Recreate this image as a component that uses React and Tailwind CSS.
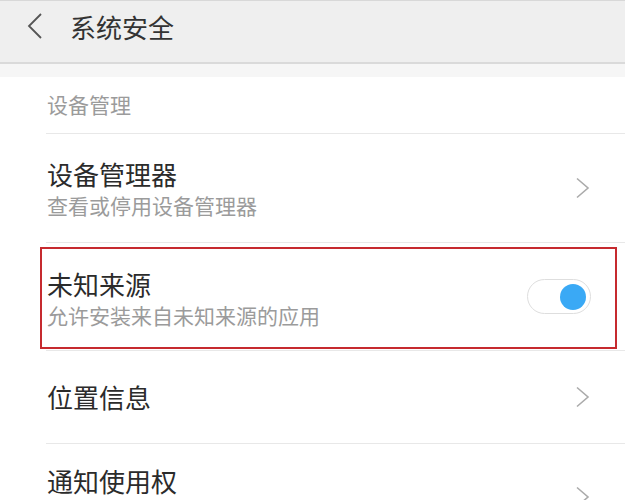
import React, { useState } from "react";

const font = "font-['Noto_Sans_CJK_SC','Noto_Sans',sans-serif]";

function ChevronRight() {
  return (
    <svg width="15" height="22" viewBox="0 0 15 22" className="shrink-0">
      <polyline points="2,1.5 13,11 2,20.5" fill="none" stroke="#ababab" strokeWidth="1.6" strokeLinejoin="miter" />
    </svg>
  );
}

function Toggle({ on, onClick }) {
  return (
    <button
      onClick={onClick}
      className={`w-[64px] h-[35px] rounded-full border-[1.5px] border-[#dedede] bg-white flex items-center px-[4px] shrink-0 ${on ? "justify-end" : "justify-start"}`}
    >
      <span className={`w-[26px] h-[26px] rounded-full ${on ? "bg-[#3aa9f5]" : "bg-[#d0d0d0]"}`} />
    </button>
  );
}

export default function App() {
  const [unknownSources, setUnknownSources] = useState(true);

  return (
    <div className={`w-[625px] h-[500px] overflow-hidden bg-white ${font}`}>
      {/* Title bar */}
      <div className="h-[62px] bg-[#efefef] border-t border-[#d8d8d8] flex items-start pt-[10px]">
        <svg width="16" height="26" viewBox="0 0 16 26" className="ml-[27px] mt-[2px] shrink-0">
          <polyline points="14,1 2,13 14,25" fill="none" stroke="#555555" strokeWidth="1.8" />
        </svg>
        <span className="ml-[27px] text-[26px] leading-[32px] text-[#333333]">系统安全</span>
      </div>
      <div className="h-[2px] bg-[#dadada]" />
      <div className="h-[13px] bg-[#f6f6f6]" />

      {/* Section label */}
      <div className="h-[56px] pl-[47px] flex items-center text-[21px] text-[#9b9b9b]">设备管理</div>

      <div className="ml-[46px]">
        {/* 设备管理器 */}
        <div className="h-[109px] border-t border-[#e8e8e8] flex items-center pr-[35px]">
          <div className="flex-1 flex flex-col self-start pt-[24px] pl-px">
            <span className="text-[26px] leading-[32px] text-[#2b2b2b]">设备管理器</span>
            <span className="text-[21px] leading-[30px] text-[#9b9b9b]">查看或停用设备管理器</span>
          </div>
          <ChevronRight />
        </div>

        {/* 未知来源 */}
        <div className="relative h-[108px] border-t border-[#e8e8e8] flex items-center pr-[34px]">
          <div className="flex-1 flex flex-col self-start pt-[25px] pl-px">
            <span className="text-[26px] leading-[32px] text-[#2b2b2b]">未知来源</span>
            <span className="text-[21px] leading-[30px] text-[#9b9b9b]">允许安装来自未知来源的应用</span>
          </div>
          <Toggle on={unknownSources} onClick={() => setUnknownSources(!unknownSources)} />
          <div className="absolute -left-[6px] right-[8px] top-[4px] bottom-[1px] border-2 border-[#c62a2f] pointer-events-none" />
        </div>

        {/* 位置信息 */}
        <div className="h-[93px] border-t border-[#e8e8e8] flex items-center pr-[35px]">
          <span className="flex-1 pl-px text-[26px] leading-[32px] text-[#2b2b2b]">位置信息</span>
          <ChevronRight />
        </div>

        {/* 通知使用权 */}
        <div className="h-[106px] border-t border-[#e8e8e8] flex items-center pr-[35px]">
          <div className="flex-1 flex flex-col self-start pt-[21px] pl-px">
            <span className="text-[26px] leading-[32px] text-[#2b2b2b]">通知使用权</span>
          </div>
          <ChevronRight />
        </div>
      </div>
    </div>
  );
}
